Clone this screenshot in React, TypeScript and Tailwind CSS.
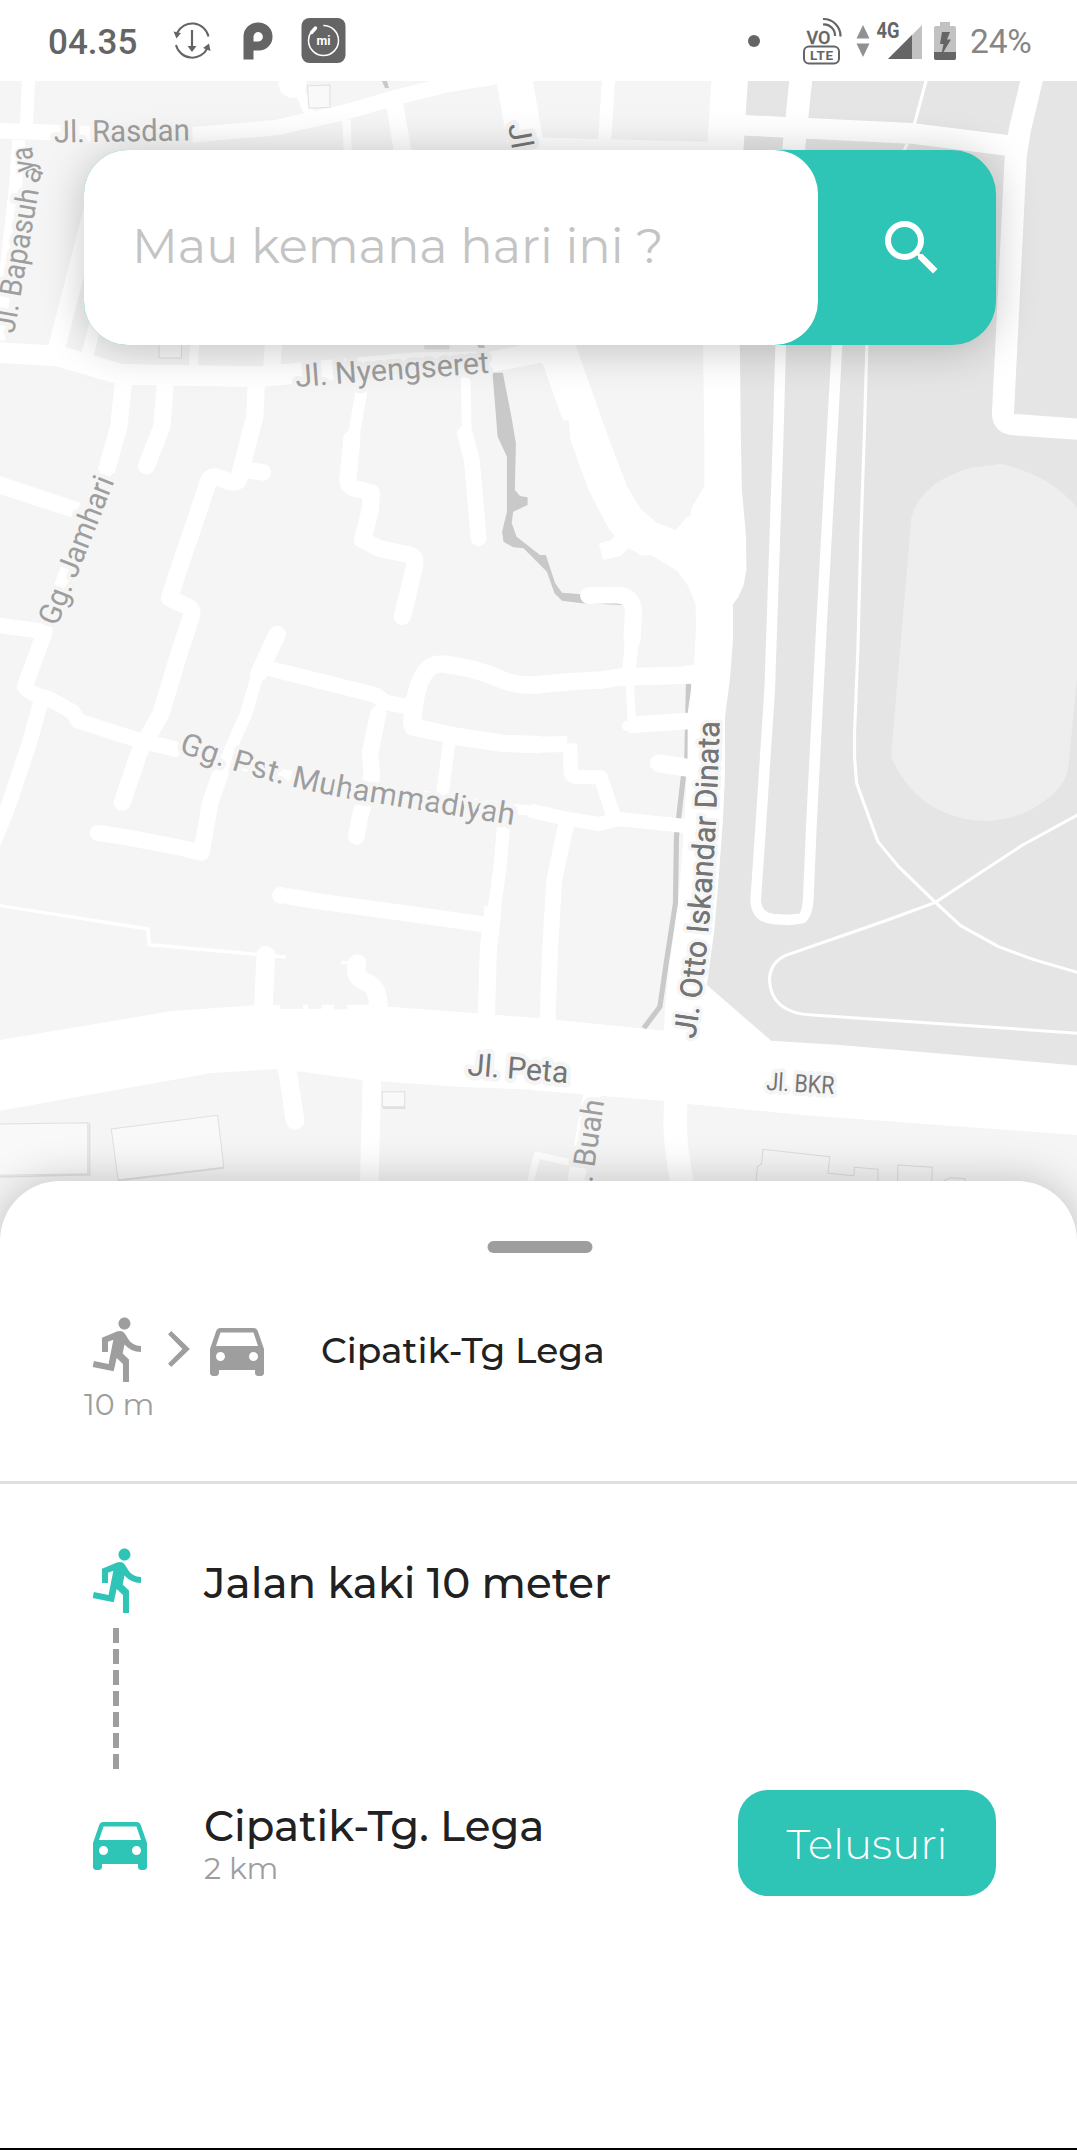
import { MdDirectionsCar, MdDirectionsRun, MdSearch } from "react-icons/md";

const DARK = "#656565";

function StatusBar() {
  return (
    <header className="flex h-[81px] items-center bg-white font-['Roboto',sans-serif] text-[#656565]">
      <span className="mt-[3px] ml-[48px] w-[90px] text-[35px] leading-none font-medium">04.35</span>
      <svg className="ml-[34px] h-[40px] w-[40px]" viewBox="0 0 40 40" fill="none" stroke={DARK} strokeWidth="2">
        <path d="M5 12 A16.8 16.8 0 0 1 36.500 15.500" />
        <path d="M4 24 A16.800 16.800 0 0 0 35.500 27" />
        <path d="M20 9 V28" strokeWidth="2.200" />
        <path d="M15.500 25 H24.500 L20 31 Z M1.500 10.500 L9 12 L4.500 17.500 Z M38.500 30 L31 27 L37 22.500 Z" fill={DARK} stroke="none" />
      </svg>
      <svg className="ml-[31px] h-[38px] w-[30px]" viewBox="0 0 30 38">
        <path
          fill={DARK}
          fillRule="evenodd"
          d="M.5 37.500 V14 A14 14 0 0 1 15 .500 A14 14 0 0 1 29.500 15 A13.500 13.500 0 0 1 16 28.500 H10.500 V37.500Z M10.500 19.500 V14.500 A4.700 4.700 0 1 1 15 19.500Z"
        />
      </svg>
      <svg className="ml-[28px] h-[45px] w-[45px]" viewBox="0 0 45 45">
        <rect x=".5" y="0" width="44" height="45" rx="8" fill={DARK} />
        <circle cx="22.500" cy="22.500" r="15" fill="none" stroke="#fff" strokeWidth="1.500" strokeDasharray="80 14.200" strokeDashoffset="-70" />
        <path d="M10.500 14.500 L14.500 10" stroke="#fff" strokeWidth="3.400" strokeLinecap="round" />
        <text x="15.500" y="27" textLength="14" lengthAdjust="spacingAndGlyphs" fontSize="12" fontWeight="700" fill="#fff">mi</text>
      </svg>
      <span className="ml-[402px] h-[12px] w-[12px] rounded-full bg-[#656565]" />
      <svg className="ml-[42px] h-[48px] w-[42px] overflow-visible" viewBox="802 15 42 48" fill="none" stroke={DARK}>
        <text x="806.500" y="41.500" textLength="24" lengthAdjust="spacingAndGlyphs" fontSize="19" fontWeight="500" fill={DARK} stroke={DARK} strokeWidth=".3">VO</text>
        <path d="M823 22.500 A11 11 0 0 1 835 34 M823 17 A17 17 0 0 1 840.500 34.500" strokeWidth="2.200" />
        <rect x="804" y="44.500" width="35" height="17" rx="5" strokeWidth="2" />
        <text x="810" y="58" textLength="23" fontSize="13.500" fontWeight="700" fill={DARK} stroke="none">LTE</text>
      </svg>
      <svg className="ml-[12px] h-[32px] w-[14px]" viewBox="0 0 14 32" fill="#919191">
        <path d="M7 0 L13.500 13.500 H.5Z M.5 18.500 H13.500 L7 32Z" />
      </svg>
      <svg className="ml-[6px] h-[38px] w-[47px] overflow-visible" viewBox="876 22 47 38">
        <path d="M922 25 V59 H888Z" fill="#c2c2c2" />
        <path d="M912 35 V59 H888Z" fill={DARK} />
        <text x="876.500" y="37.500" textLength="23" lengthAdjust="spacingAndGlyphs" fontSize="21.500" fontWeight="700" fill={DARK} stroke="#fff" strokeWidth="3" paintOrder="stroke">4G</text>
      </svg>
      <svg className="ml-[11px] h-[38px] w-[22px]" viewBox="0 0 22 38">
        <path d="M6 0 H16 V4 H20 Q22 4 22 6 V36 Q22 38 20 38 H2 Q0 38 0 36 V6 Q0 4 2 4 H6Z" fill="#c2c2c2" />
        <path d="M0 30 H22 V36 Q22 38 20 38 H2 Q0 38 0 36Z" fill={DARK} />
        <path d="M8 10 H16 L13 17.500 H17 L7 34 L9.500 22 H6Z" fill={DARK} />
      </svg>
      <span className="mt-[2px] ml-[14px] text-[33.500px] leading-none tracking-[-0.2px] text-[#868686]">24%</span>
    </header>
  );
}

/* Street map: the western and eastern halves are drafted on the same grid. */
function StreetMap() {
  return (
    <svg className="absolute inset-0 h-full w-full" viewBox="0 81 1077 1169" preserveAspectRatio="none">
      <rect x="0" y="81" width="1077" height="1169" fill="#f5f5f5" />

      {/* river */}
      <g fill="#c9c9c9">
        <path transform="matrix(.34439 0 0 .33333 0 440)" d="M1430 -202 L1460 -202 L1485 -70 L1498 10 L1495 150 L1510 168 L1532 172 L1532 195 L1490 215 L1486 250 L1500 290 L1568 345 L1585 345 L1612 430 L1632 458 L1690 463 L1812 495 L1690 490 L1632 482 L1610 460 L1588 395 L1520 325 L1490 322 L1462 305 L1458 275 L1472 215 L1472 50 L1445 -10Z" />
        <path d="M477 345 h7 l1 3 h-6Z M382 81 l5 0 l2 7 l-4 0Z" />
      </g>
      <path transform="matrix(.34439 0 0 .33333 537 440)" d="M440 725 L435 960 L425 1010 L405 1190 L402 1390 L375 1570 L357 1700 L310 1765" fill="none" stroke="#c9c9c9" strokeWidth="15" />

      {/* buildings */}
      <g transform="matrix(.34439 0 0 .33333 0 440)" fill="#f9f9f9" stroke="#e0e0e0" strokeWidth="3">
        <path d="M-5 2052 L255 2048 V2201 L-5 2206Z" />
        <path d="M323 2067 L632 2026 L650 2182 L343 2220Z" />
        <path d="M260 2050 V2204 L0 2211 M650 2184 L343 2222" fill="none" strokeWidth="5" />
        <path d="M1110 1955 H1175 V2000 H1110Z" />
        <path d="M1112 2004 H1178" strokeWidth="6" />
        <path d="M462 -290 H527 V-246 H462Z" />
        <path d="M1232 -290 H1305 V-272 H1232Z" fill="#e2e2e2" stroke="none" />
      </g>
      <path transform="matrix(.34439 0 0 .33333 537 820)" d="M636 1083 L640 1040 L652 1032 L656 988 L850 1010 L845 1060 L920 1067 L922 1042 L990 1048 V1083 M1047 1083 L1048 1035 L1148 1042 L1146 1083 M1180 1083 L1200 1073 L1243 1076 V1083" fill="none" stroke="#dcdcdc" strokeWidth="3" />

      {/* western streets */}
      <g transform="matrix(.34439 0 0 .33333 0 440)" fill="none" stroke="#fff" strokeWidth="50" strokeLinejoin="round">
        <path d="M0 1800 L500 1713 L740 1696 L813 1696 V1706 H880 V1694 H894 V1706 H934 V1694 H970 V1708 H1008 V1695 L1060 1695 L1385 1720 L1600 1738 L1600 1951 L1330 1940 L1050 1920 L860 1893 L800 1887 L610 1900 L0 2012Z" fill="#fff" stroke="none" />
        <path strokeWidth="46" d="M-10 -928 L300 -918 L550 -915 L800 -937 L1000 -983 L1150 -1028 L1300 -1066 L1440 -1090" />
        <path strokeWidth="38" d="M83 -1090 L76 -920" />
        <path strokeWidth="38" d="M55 -900 L45 -760 L-5 -300" />
        <path strokeWidth="80" d="M845 -1095 L850 -1066" strokeLinecap="round" />
        <path strokeWidth="30" d="M865 -1060 L900 -975" />
        <path strokeWidth="24" d="M1006 -960 L1010 -860" />
        <path d="M1143 -1025 L1170 -860" />
        <path strokeWidth="62" d="M-10 -263 L170 -252 L350 -197 L760 -190 L900 -205 L1200 -232 L1430 -235 L1580 -265" />
        <path d="M163 -270 L270 -700" />
        <path strokeWidth="36" d="M250 -240 L310 -480" />
        <path strokeWidth="26" d="M566 -300 L560 -200" />
        <path d="M795 -300 L788 -200" />
        <path d="M358 -170 L345 -40 L308 95" />
        <path strokeWidth="36" d="M308 95 L150 500 L128 580" />
        <path strokeLinecap="round" d="M480 -170 L470 -40 L425 78" />
        <path strokeLinecap="round" d="M744 -170 L740 -70 L700 88 L762 97 M700 88 L693 118 Q688 130 672 126 L625 110 Q610 108 605 125 L558 270 L515 400 L492 475 L545 500 Q562 508 555 530 L517 650 L468 820 L405 935 L355 1087" />
        <path d="M-10 132 L225 212" />
        <path strokeWidth="46" d="M-10 555 L130 575 L72 740 Q85 762 140 775 L210 815 L228 843 L400 900 L520 930" />
        <path strokeWidth="30" d="M520 930 L800 1000 L1500 1108 L1600 1118" />
        <path strokeWidth="44" d="M120 780 L85 910 L20 1110 L-20 1210" />
        <path strokeLinecap="round" d="M805 582 L765 670 L752 700" />
        <path strokeWidth="36" d="M750 695 L715 820 L668 930 L640 1010" />
        <path strokeWidth="48" strokeLinecap="round" d="M640 1000 L610 1090 L585 1238 L520 1222 L370 1192 L285 1179" />
        <path strokeWidth="46" d="M760 680 L1090 765 L1120 788 L1200 802" />
        <path strokeWidth="52" d="M1195 860 L1205 780 Q1225 668 1285 672 Q1370 680 1460 720 Q1500 738 1570 735" />
        <path strokeWidth="52" d="M1196 850 L1200 861 L1330 890 L1460 910 L1570 914" />
        <path strokeWidth="48" strokeLinecap="round" d="M1098 822 L1074 940 L1080 1010 L1045 1130 L1035 1190" />
        <path strokeWidth="36" d="M1305 900 L1285 1060" />
        <path strokeWidth="34" d="M1050 -150 L1022 20" />
        <path strokeLinecap="round" d="M1022 -5 L1010 120 Q1012 145 1050 150 L1078 158 L1075 210 L1053 300 L1100 325 L1190 345 Q1210 350 1203 380 L1185 460 L1168 530" />
        <path strokeWidth="28" d="M1352 -190 L1356 0" />
        <path strokeWidth="46" strokeLinecap="round" d="M1350 -20 L1370 60 L1390 295" />
        <path strokeWidth="48" d="M830 1368 L930 1385 L1200 1423 L1430 1457" />
        <circle cx="815" cy="1366" r="12" strokeWidth="26" />
        <path strokeWidth="38" d="M1462 1160 L1452 1280 L1436 1400 L1418 1530" />
        <path d="M1432 1400 L1418 1530 L1412 1735" />
        <path strokeWidth="54" strokeLinecap="round" d="M772 1545 L765 1700" />
        <path strokeWidth="54" strokeLinecap="round" d="M1037 1570 Q1025 1610 1060 1625 Q1100 1640 1098 1700" />
        <path strokeWidth="10" strokeLinejoin="miter" d="M-5 1396 L430 1467 L433 1514 L745 1543 L830 1551 M990 1567 L1030 1570" />
        <path strokeWidth="54" strokeLinecap="round" d="M833 1880 L857 2042" />
        <path strokeWidth="54" d="M1080 1910 L1072 2240" />
        <path d="M893 -1063 L958 -1065 V-998 L897 -995Z" fill="#f9f9f9" stroke="#e0e0e0" strokeWidth="3" />
      </g>

      {/* eastern streets and park */}
      <g transform="matrix(.34439 0 0 .33333 537 440)" fill="none" stroke="#fff" strokeWidth="50" strokeLinejoin="round">
        <path d="M507 -1090 L495 -890 L482 -285 L486 0 L486 137 L447 207 L447 228 L435 232 L402 271 L345 247 L300 205 L262 140 L210 0 L112 -285 L60 -400 L-40 -300 L20 -220 L75 -60 L92 -58 L97 0 L150 150 L210 270 L226 287 L215 300 L180 311 L192 360 L245 347 L265 323 L305 347 L330 345 L408 393 L440 440 L460 490 L462 550 L456 675 L425 677 L450 730 L438 815 L437 955 L435 1010 L425 1190 L410 1390 L385 1570 L372 1700 L368 1780 L800 1840 L800 -1090Z" fill="#fff" stroke="none" />
        <path d="M-10 1735 L60 1740 L370 1772 L500 1700 L700 1790 L1570 1870 V2085 L770 2025 L440 1992 L370 1983 L-10 1951Z" fill="#fff" stroke="none" />
        <path strokeWidth="104" d="M-67 -1090 L-30 -870 L40 -285" />
        <path strokeWidth="60" d="M-20 -878 L600 -862" />
        <path strokeWidth="38" d="M208 -1090 L196 -890" />
        <path strokeLinecap="round" d="M150 467 L235 465 Q280 465 280 520 L276 600" />
        <path strokeWidth="40" d="M277 590 L266 700" />
        <path strokeWidth="52" d="M-10 735 L100 725 L190 720 L240 711 L455 705" />
        <path strokeWidth="24" d="M269 730 L276 850" />
        <path strokeWidth="50" d="M265 855 L440 843" />
        <path strokeWidth="30" strokeLinecap="round" d="M262 858 h20" />
        <path strokeWidth="54" strokeLinecap="round" d="M355 970 L410 979" />
        <path strokeWidth="54" d="M400 977 L440 984" />
        <path strokeWidth="48" d="M-10 914 L88 912" />
        <path strokeWidth="42" d="M96 910 L98 1000 Q102 1012 120 1012 L185 1012 L222 1125" />
        <path strokeWidth="42" d="M-20 1112 L80 1135 L180 1152 L240 1137 L430 1158" />
        <path strokeWidth="46" d="M85 1150 L50 1320 L38 1530 L30 1760" />
        <path strokeWidth="68" d="M403 1970 L401 2050 Q402 2130 425 2250" />
        <path strokeWidth="50" d="M162 1950 L110 2240" />
        <path strokeWidth="20" d="M-20 2230 L0 2145 L100 2168" />

        <path d="M613 -1090 L600 -880 L589 -290 L592 0 L595 150 L607 290 L608 390 L600 435 L585 470 L569 493 L569 600 L560 720 L546 830 L546 1000 L540 1140 L527 1320 L515 1470 L493 1635 L680 1802 L880 1815 L1575 1877 V-1090Z" fill="#e5e5e5" stroke="none" />
        <path d="M1350 72 L1258 83 Q1110 130 1087 235 L1028 950 Q1060 1030 1120 1080 Q1200 1140 1300 1143 Q1400 1140 1470 1085 Q1535 1040 1543 980 L1575 640 V212 Q1500 110 1350 72Z" fill="#eee" stroke="none" />
        <path strokeWidth="62" d="M585 -945 L785 -935 L1085 -920 L1395 -880" />
        <path strokeWidth="66" d="M767 -1090 L745 -870" />
        <path strokeWidth="64" d="M1440 -1095 L1402 -930 L1390 -850 L1353 -80 Q1353 -47 1385 -46 L1575 -32" />
        <path strokeWidth="31" d="M708 -300 L700 0 L676 740 L673 790 L647 1200 L635 1380 Q637 1432 685 1437 L728 1440 L765 1436 Q785 1432 788 1370 L797 1150 L826 560 L856 0 L872 -300" />
        <path strokeWidth="9" d="M1133 -1090 L1095 -945 M1075 -890 L1065 -865 M958 -290 L950 0 L940 300 L932 620 L922 880 L922 950 L928 1030 L990 1205 L1050 1280 L1157 1387 L1230 1457 L1340 1520 L1440 1558 L1575 1599" />
        <path strokeWidth="9" d="M1575 1122 L1410 1215 L1157 1387 L1010 1443 L720 1547 Q676 1570 675 1620 Q680 1720 800 1725 L1575 1780" />
      </g>

      {/* street names */}
      <defs>
        <path id="pst" d="M178 752 C240 774 300 790 345 798 L525 827" />
        <path id="otto" d="M695 1039 C710 945 717 830 720 700" />
      </defs>
      <g fontFamily="Roboto, sans-serif" fontSize="30.500" fill="#9e9e9e" stroke="#f5f5f5" strokeWidth="9" strokeLinejoin="round" paintOrder="stroke">
        <text transform="translate(54 142.500) rotate(-.8)" textLength="136" lengthAdjust="spacingAndGlyphs">Jl. Rasdan</text>
        <text transform="translate(14 334) rotate(-80.200)" textLength="146" lengthAdjust="spacingAndGlyphs">Jl. Bapasuh</text>
        <text transform="translate(36.500 185) rotate(-62)" fontSize="29" strokeWidth="4">a</text>
        <text transform="translate(34.500 171) rotate(-96)" textLength="25" lengthAdjust="spacingAndGlyphs" strokeWidth="4">ya</text>
        <text transform="translate(296 387) rotate(-4.200)" textLength="194" lengthAdjust="spacingAndGlyphs">Jl. Nyengseret</text>
        <text transform="translate(57 627) rotate(-68.500)" textLength="157" lengthAdjust="spacingAndGlyphs">Gg. Jamhari</text>
        <text textLength="344" lengthAdjust="spacingAndGlyphs"><textPath href="#pst">Gg. Pst. Muhammadiyah</textPath></text>
        <text transform="translate(592 1183) rotate(-81.500)" textLength="83" lengthAdjust="spacingAndGlyphs">. Buah</text>
        <g fill="#757575">
          <text transform="translate(508 125) rotate(80)" textLength="34" lengthAdjust="spacingAndGlyphs">Jl.</text>
          <text strokeWidth="7" textLength="319" lengthAdjust="spacingAndGlyphs"><textPath href="#otto">Jl. Otto Iskandar Dinata</textPath></text>
          <text stroke="none" aria-hidden="true" textLength="319" lengthAdjust="spacingAndGlyphs"><textPath href="#otto">Jl. Otto Iskandar Dinata</textPath></text>
          <text transform="translate(467 1075) rotate(4.500)" textLength="101" lengthAdjust="spacingAndGlyphs">Jl. Peta</text>
          <text transform="translate(766 1090) rotate(3.500)" fontSize="25" strokeWidth="8" textLength="68" lengthAdjust="spacingAndGlyphs">Jl. BKR</text>
        </g>
      </g>
    </svg>
  );
}

function SearchBar() {
  return (
    <div className="relative ml-[84px] flex h-[195px] w-[912px] rounded-[44px] bg-[#2ec4b6] shadow-[0_4px_44px_rgba(0,0,0,0.22)]">
      <div className="flex w-[734px] items-center rounded-[44px] bg-white pl-[48px]">
        <span className="-mt-[3px] text-[48px] leading-none font-normal whitespace-nowrap text-[#c4c4c4]">Mau kemana hari ini ?</span>
      </div>
      <button className="flex flex-1 items-center pl-[58px]">
        <MdSearch className="size-[72px] text-white" />
      </button>
    </div>
  );
}

function RouteSummary() {
  return (
    <div className="flex h-[228px] pt-[60px] pl-[84px] text-[#9e9e9e]">
      <div className="w-[237px]">
        <div className="flex">
          <MdDirectionsRun className="size-[72px]" />
          <svg className="h-[72px] w-[45px]" viewBox="4.500 0 15 24" fill="currentColor">
            <path d="M9.600 6 8.500 7.100 13.300 12l-4.800 4.900L9.600 18l6.200-6z" />
          </svg>
          <MdDirectionsCar className="size-[72px]" />
        </div>
        <div className="mt-[5px] text-[30px] leading-[30px] font-normal">10 m</div>
      </div>
      <div className="mt-[19px] text-[36px] leading-[36px] font-medium whitespace-nowrap text-[#212121]">Cipatik-Tg Lega</div>
    </div>
  );
}

function RouteSteps() {
  return (
    <div className="flex flex-col border-t-[3px] border-[#e0e0e0] pt-[60px] pr-[81px] pl-[84px] text-[#212121]">
      <div className="flex h-[72px] items-center">
        <MdDirectionsRun className="size-[72px] text-[#2ec4b6]" />
        <span className="mt-[5px] ml-[48px] text-[42px] leading-none font-medium whitespace-nowrap">Jalan kaki 10 meter</span>
      </div>
      <div className="mt-[12px] ml-[28.500px] flex flex-col gap-[6px]">
        {Array.from({ length: 7 }, (_, i) => (
          <span key={i} className="h-[15px] w-[6px] bg-[#9e9e9e]" />
        ))}
      </div>
      <div className="mt-[21px] flex h-[106px] items-center">
        <MdDirectionsCar className="size-[72px] text-[#2ec4b6]" />
        <div className="mt-[2px] ml-[48px]">
          <div className="text-[42px] leading-[50px] font-medium whitespace-nowrap">Cipatik-Tg. Lega</div>
          <div className="text-[30px] leading-[36px] font-normal text-[#9e9e9e]">2 km</div>
        </div>
        <button className="ml-auto h-[106px] w-[258px] rounded-[30px] bg-[#2ec4b6] pt-[2px] text-[42px] font-light text-white">Telusuri</button>
      </div>
    </div>
  );
}

export default function App() {
  return (
    <div className="flex h-[2150px] w-[1077px] flex-col overflow-hidden bg-white font-['Montserrat','Inter',sans-serif]">
      <StatusBar />
      <section className="relative h-[1169px] shrink-0 overflow-hidden pt-[69px]">
        <StreetMap />
        <SearchBar />
      </section>
      <main className="relative -mt-[69px] flex-1 rounded-t-[60px] border-b-2 border-black bg-white pt-[60px] shadow-[0_0_44px_rgba(0,0,0,0.22)]">
        <div className="mx-auto h-[12px] w-[105px] translate-x-[1.500px] rounded-full bg-[#9e9e9e]" />
        <RouteSummary />
        <RouteSteps />
      </main>
    </div>
  );
}
